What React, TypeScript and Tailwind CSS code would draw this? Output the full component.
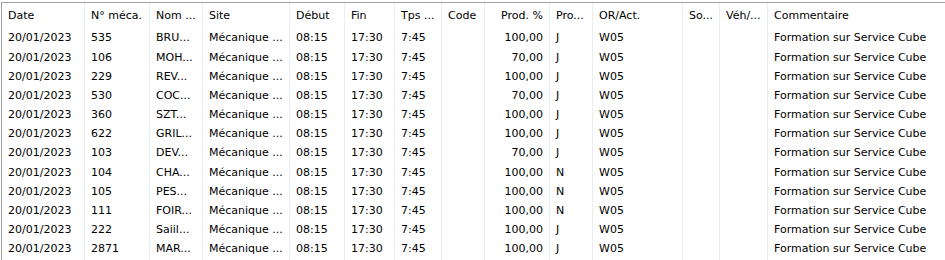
import React from 'react';

type Col = { key: string; label: string; w: string; right?: boolean };

const cols: Col[] = [
  { key: 'date', label: 'Date', w: 'w-[83px]' },
  { key: 'num', label: 'N° méca.', w: 'w-[65px]' },
  { key: 'nom', label: 'Nom ...', w: 'w-[53px]' },
  { key: 'site', label: 'Site', w: 'w-[87px]' },
  { key: 'debut', label: 'Début', w: 'w-[55px]' },
  { key: 'fin', label: 'Fin', w: 'w-[50px]' },
  { key: 'tps', label: 'Tps ...', w: 'w-[47px]' },
  { key: 'code', label: 'Code', w: 'w-[43px]' },
  { key: 'prod', label: 'Prod. %', w: 'w-[65px]', right: true },
  { key: 'pro', label: 'Pro...', w: 'w-[43px]' },
  { key: 'or', label: 'OR/Act.', w: 'w-[90px]' },
  { key: 'so', label: 'So...', w: 'w-[37px]' },
  { key: 'veh', label: 'Véh/...', w: 'w-[48px]' },
  { key: 'comment', label: 'Commentaire', w: 'w-[190px]' },
];

const people: [string, string, string, string][] = [
  ['535', 'BRU...', '100,00', 'J'],
  ['106', 'MOH...', '70,00', 'J'],
  ['229', 'REV...', '100,00', 'J'],
  ['530', 'COC...', '70,00', 'J'],
  ['360', 'SZT...', '100,00', 'J'],
  ['622', 'GRIL...', '100,00', 'J'],
  ['103', 'DEV...', '70,00', 'J'],
  ['104', 'CHA...', '100,00', 'N'],
  ['105', 'PES...', '100,00', 'N'],
  ['111', 'FOIR...', '100,00', 'N'],
  ['222', 'Saiil...', '100,00', 'J'],
  ['2871', 'MAR...', '100,00', 'J'],
];

const rows = people.map(([num, nom, prod, pro]) => ({
  date: '20/01/2023',
  num,
  nom,
  site: 'Mécanique ...',
  debut: '08:15',
  fin: '17:30',
  tps: '7:45',
  code: '',
  prod,
  pro,
  or: 'W05',
  so: '',
  veh: '',
  comment: 'Formation sur Service Cube',
}));

export default function App() {
  return (
    <div className="w-[945px] h-[260px] bg-white overflow-hidden pt-[2px] pl-[1px] font-['DejaVu_Sans',sans-serif] text-[11px] text-black">
      <div className="h-full border-t border-l border-[#a0a0a0] flex">
        {cols.map((c) => (
          <div key={c.key} className={`${c.w} shrink-0 border-r border-[#eaeef2] flex flex-col`}>
            <div className={`h-[26px] pt-[1px] flex items-center px-[6px] whitespace-nowrap overflow-hidden ${c.right ? 'justify-end' : ''}`}>
              {c.label}
            </div>
            {rows.map((r, i) => (
              <div
                key={i}
                className={`h-[19.2px] shrink-0 flex items-center px-[6px] whitespace-nowrap overflow-hidden ${c.right ? 'justify-end' : ''}`}
              >
                {(r as Record<string, string>)[c.key]}
              </div>
            ))}
          </div>
        ))}
      </div>
    </div>
  );
}
